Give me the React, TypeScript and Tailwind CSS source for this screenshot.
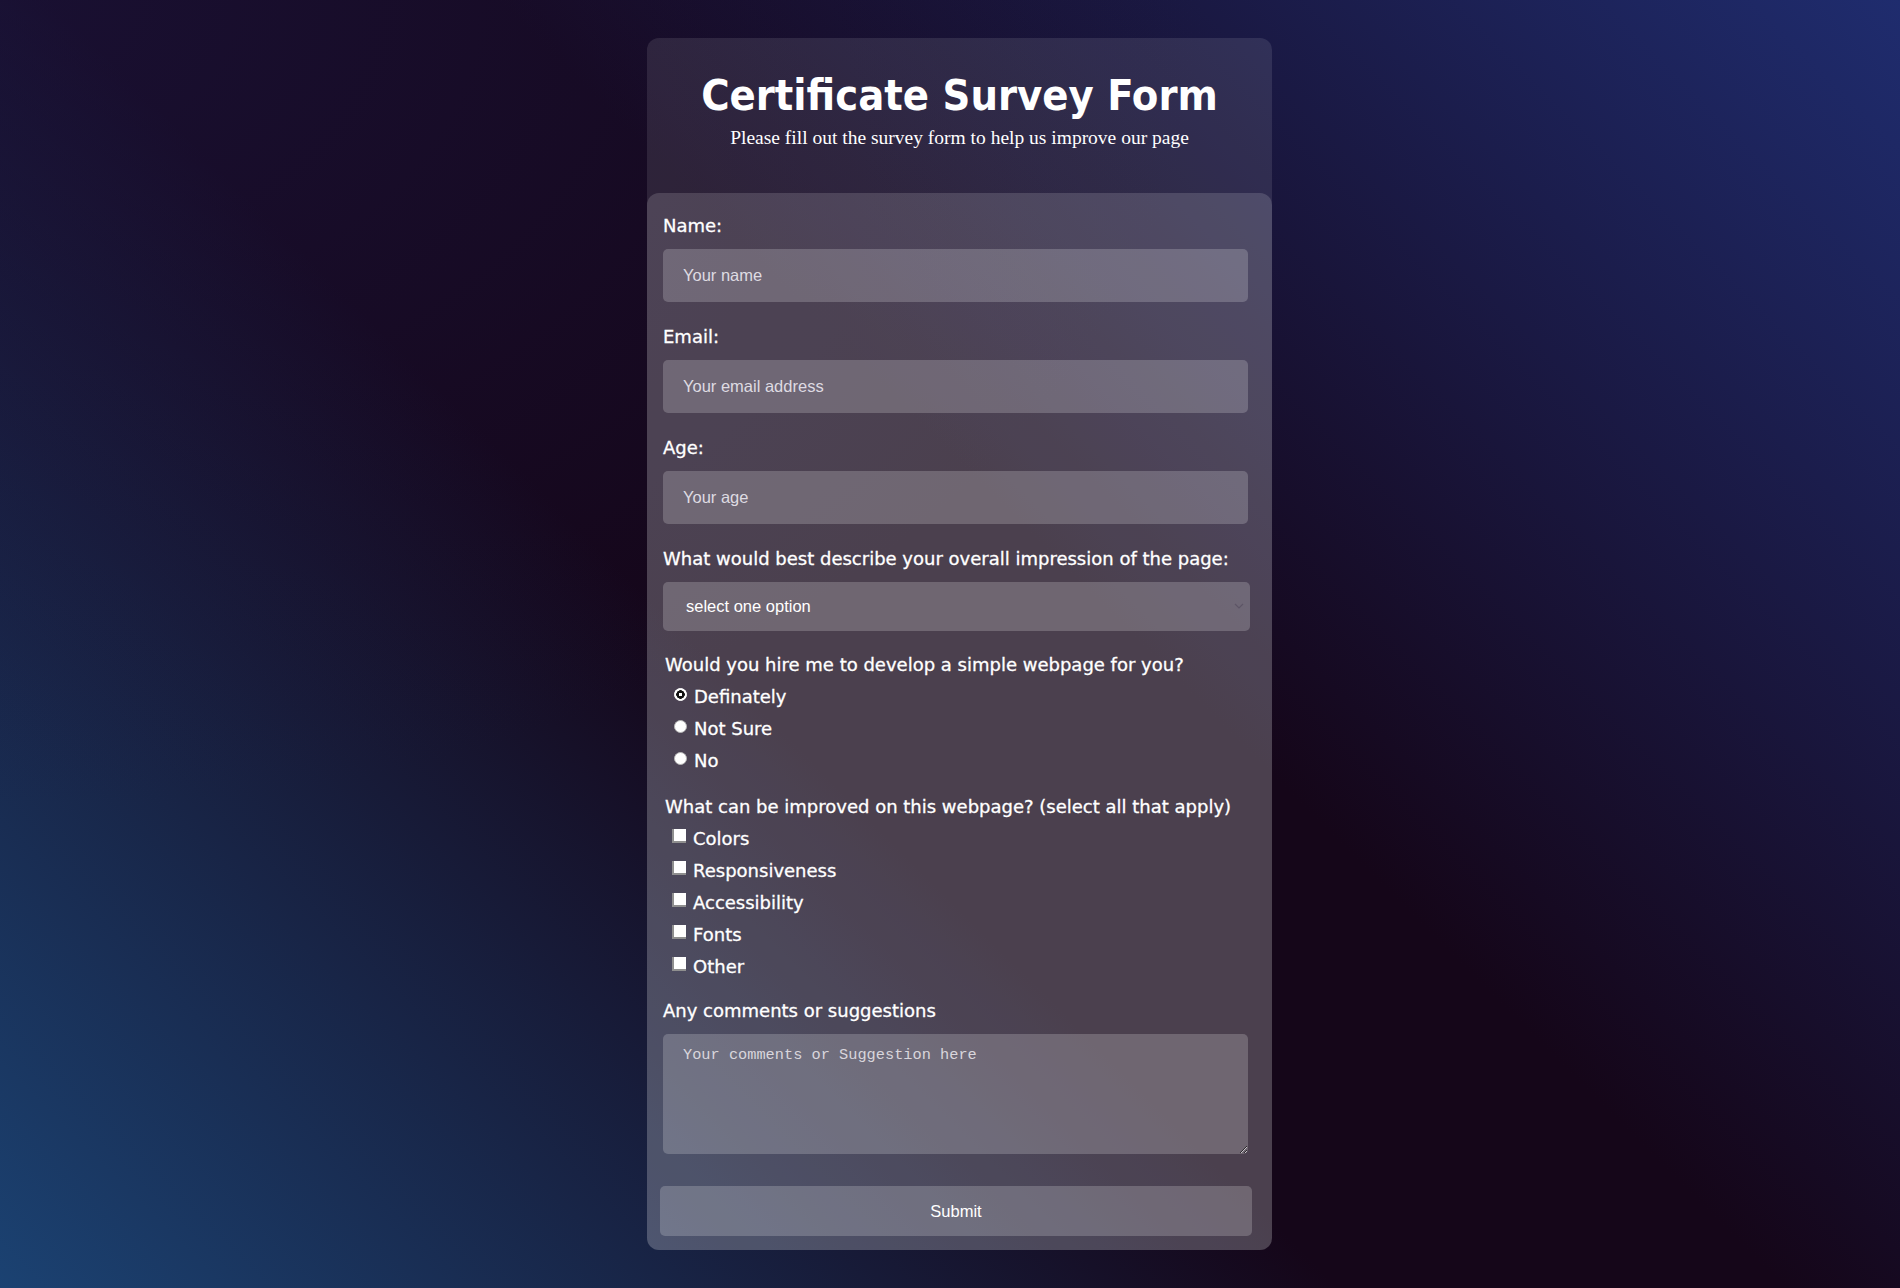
import React from "react";

const labelFont =
  "font-['DejaVu_Sans',sans-serif] text-[18px] text-white [-webkit-text-stroke:0.3px_white]";
const fieldClass =
  "w-[585px] h-[53px] rounded-[5px] bg-white/20 px-5 text-[16.5px] text-white font-['Liberation_Sans',Arial,sans-serif] placeholder:text-[#dedbe2] outline-none";

const improvements = ["Colors", "Responsiveness", "Accessibility", "Fonts", "Other"];

const SurveyForm: React.FC = () => {
  return (
    <div className="min-h-screen w-full bg-[radial-gradient(ellipse_at_0%_0%,rgba(30,28,80,0.45),transparent_45%),linear-gradient(45deg,#1b4272_0%,#150619_42%,#150619_56%,#1f2c6e_100%)] pl-[19px] py-[38px] flex justify-center">
      <div className="w-[625px] rounded-[12px] bg-white/10 flex flex-col">
        <header className="flex flex-col items-center pt-[33px] pb-[44px] text-white">
          <h1 className="font-['DejaVu_Sans_Condensed','DejaVu_Sans',sans-serif] [font-stretch:condensed] font-bold text-[43px] leading-[48px]">
            Certificate Survey Form
          </h1>
          <p className="mt-[8px] font-['Liberation_Serif',serif] text-[19.5px] leading-[22px]">
            Please fill out the survey form to help us improve our page
          </p>
        </header>

        <form className="flex-1 rounded-[12px] bg-white/15 pl-4 pt-[22px] pb-[13px] flex flex-col">
          <label className={`${labelFont} leading-[22px]`}>Name:</label>
          <input className={`${fieldClass} mt-3`} type="text" placeholder="Your name" />

          <label className={`${labelFont} leading-[22px] mt-6`}>Email:</label>
          <input className={`${fieldClass} mt-3`} type="email" placeholder="Your email address" />

          <label className={`${labelFont} leading-[22px] mt-6`}>Age:</label>
          <input className={`${fieldClass} mt-3`} type="number" placeholder="Your age" />

          <label className={`${labelFont} leading-[22px] mt-6`}>
            What would best describe your overall impression of the page:
          </label>
          <div className="relative mt-3 w-[587px]">
            <select className="w-full h-[49px] appearance-none rounded-[5px] bg-white/20 pl-[23px] text-[16.5px] text-white font-['Liberation_Sans',Arial,sans-serif] outline-none">
              <option>select one option</option>
              <option>Excellent</option>
              <option>Good</option>
              <option>Needs work</option>
            </select>
            <svg
              className="absolute right-[6px] top-[20px] pointer-events-none"
              width="10"
              height="8"
              viewBox="0 0 10 8"
              fill="none"
            >
              <path d="M1 2l4 4 4-4" stroke="#5d5566" strokeWidth="1.2" />
            </svg>
          </div>

          <div className="mt-[17px] ml-[2px] flex flex-col">
            <p className={`${labelFont} h-8 flex items-center`}>
              Would you hire me to develop a simple webpage for you?
            </p>
            {["Definately", "Not Sure", "No"].map((opt, i) => (
              <label key={opt} className={`${labelFont} h-8 flex items-center`}>
                <input
                  type="radio"
                  name="hire"
                  defaultChecked={i === 0}
                  className="appearance-none ml-[9px] mr-[7px] mb-[3px] w-[13px] h-[13px] rounded-full bg-white border border-[#b8b8b8] checked:border-white checked:bg-[radial-gradient(circle,#ffffff_0_1.5px,#111111_2px_4px,#ffffff_4.5px)]"
                />
                {opt}
              </label>
            ))}
          </div>

          <div className="mt-[14px] ml-[2px] flex flex-col">
            <p className={`${labelFont} h-8 flex items-center`}>
              What can be improved on this webpage? (select all that apply)
            </p>
            {improvements.map((opt) => (
              <label key={opt} className={`${labelFont} h-8 flex items-center`}>
                <input
                  type="checkbox"
                  className="appearance-none ml-[7px] mr-[7px] mb-[4px] w-[14px] h-[14px] bg-white border-l-2 border-b-2 border-[#8f8f8f]"
                />
                {opt}
              </label>
            ))}
          </div>

          <label className={`${labelFont} leading-[22px] mt-[18px]`}>Any comments or suggestions</label>
          <textarea
            className="mt-3 w-[585px] h-[120px] rounded-[5px] bg-white/20 px-5 pt-[10px] text-[15.3px] text-white font-['Liberation_Mono',monospace] placeholder:text-[#d9d6dc] outline-none"
            placeholder="Your comments or Suggestion here"
          />

          <button
            type="submit"
            className="mt-8 -ml-[3px] w-[592px] h-[50px] rounded-[5px] bg-white/20 text-white text-[16.5px] font-['Liberation_Sans',Arial,sans-serif]"
          >
            Submit
          </button>
        </form>
      </div>
    </div>
  );
};

export default function App() {
  return <SurveyForm />;
}
